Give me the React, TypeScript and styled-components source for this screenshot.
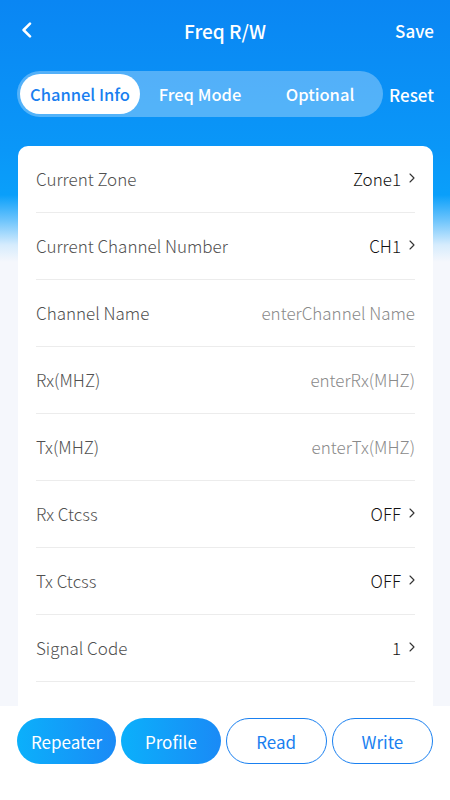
import styled, { createGlobalStyle } from "styled-components";

const GlobalStyle = createGlobalStyle`
  html, body {
    margin: 0;
    padding: 0;
  }
  body {
    font-family: "Noto Sans CJK SC", "Noto Sans", sans-serif;
    -webkit-font-smoothing: antialiased;
  }
  * {
    box-sizing: border-box;
  }
`

type Row = {
  label: string;
  value: string;
  placeholder?: boolean;
  arrow?: boolean;
}

const rows: Row[] = [
  {label: "Current Zone", value: "Zone1", arrow: true},
  {label: "Current Channel Number", value: "CH1", arrow: true},
  {label: "Channel Name", value: "enterChannel Name", placeholder: true},
  {label: "Rx(MHZ)", value: "enterRx(MHZ)", placeholder: true},
  {label: "Tx(MHZ)", value: "enterTx(MHZ)", placeholder: true},
  {label: "Rx Ctcss", value: "OFF", arrow: true},
  {label: "Tx Ctcss", value: "OFF", arrow: true},
  {label: "Signal Code", value: "1", arrow: true},
]

const Chevron = ({size = 10, color = "#333", width = 1.3, left = false}: {size?: number; color?: string; width?: number; left?: boolean}) => (
  <svg width={size * 0.6} height={size} viewBox="0 0 6 10" fill="none">
    <path
      d={left ? "M5 1 L1 5 L5 9" : "M1 1 L5 5 L1 9"}
      stroke={color}
      strokeWidth={width}
      strokeLinecap="round"
      strokeLinejoin="round"
    />
  </svg>
)

export default function App() {
  return (
    <>
      <GlobalStyle/>
      <Page>
        <NavBar>
          <BackButton>
            <Chevron size={16} color="#fff" width={1.6} left/>
          </BackButton>
          <Title>Freq R/W</Title>
          <NavAction>Save</NavAction>
        </NavBar>

        <TabsRow>
          <Tabs>
            <Tab $active>Channel Info</Tab>
            <Tab>Freq Mode</Tab>
            <Tab>Optional</Tab>
          </Tabs>
          <NavAction>Reset</NavAction>
        </TabsRow>

        <Content>
          <Card>
            {rows.map((row) => (
              <ListRow key={row.label}>
                <Label>{row.label}</Label>
                <Value $placeholder={row.placeholder}>
                  {row.value}
                  {row.arrow && <Chevron size={10} color="#333" width={1.1}/>}
                </Value>
              </ListRow>
            ))}
          </Card>
        </Content>

        <Footer>
          <ActionButton $filled>Repeater</ActionButton>
          <ActionButton $filled>Profile</ActionButton>
          <ActionButton>Read</ActionButton>
          <ActionButton>Write</ActionButton>
        </Footer>
      </Page>
    </>
  );
}

const Page = styled.div`
  width: 450px;
  height: 800px;
  display: flex;
  flex-direction: column;
  overflow: hidden;
  background: linear-gradient(180deg,
    #0a86f3 0px,
    #0a97f8 150px,
    #0a9ffa 195px,
    #6cc4fc 220px,
    #d6ecfd 245px,
    #f5f7fc 262px,
    #f5f7fc 100%);
`

const NavBar = styled.header`
  height: 60px;
  display: flex;
  align-items: center;
  justify-content: space-between;
  padding: 0 16px 0 22px;
  position: relative;
  color: #fff;
`

const BackButton = styled.div`
  width: 20px;
  display: flex;
  align-items: center;
`

const Title = styled.h1`
  margin: 0;
  font-size: 19px;
  font-weight: 500;
  color: #fff;
  position: absolute;
  left: 50%;
  transform: translateX(-50%);
`

const NavAction = styled.span`
  font-size: 17px;
  font-weight: 500;
  color: #fff;
`

const TabsRow = styled.div`
  display: flex;
  align-items: center;
  justify-content: space-between;
  padding: 11px 16px 0 17px;
`

const Tabs = styled.div`
  width: 366px;
  flex-shrink: 0;
  height: 46px;
  padding: 3px;
  display: flex;
  border-radius: 23px;
  background: rgba(255, 255, 255, 0.3);
`

const Tab = styled.div<{ $active?: boolean }>`
  flex: 1;
  display: flex;
  align-items: center;
  justify-content: center;
  border-radius: 20px;
  font-size: 16.5px;
  font-weight: 500;
  color: ${p => p.$active ? "#1a7ff0" : "#fff"};
  background: ${p => p.$active ? "#fff" : "transparent"};
`

const Content = styled.main`
  flex: 1;
  overflow: hidden;
  padding: 29px 17px 0 18px;
`

const Card = styled.section`
  background: #fff;
  border-radius: 10px;
  padding: 0 18px 40px;
`

const ListRow = styled.div`
  height: 67px;
  display: flex;
  align-items: center;
  justify-content: space-between;
  border-bottom: 1px solid #ececec;
`

const Label = styled.span`
  font-size: 17px;
  font-weight: 300;
  color: #505050;
  margin-top: -2px;
`

const Value = styled.span<{ $placeholder?: boolean }>`
  display: flex;
  align-items: center;
  gap: 8px;
  margin-top: -2px;
  font-size: 17px;
  font-weight: 300;
  color: ${p => p.$placeholder ? "#8a8a8a" : "#111"};
`

const Footer = styled.footer`
  height: 94px;
  flex-shrink: 0;
  background: #fff;
  display: flex;
  gap: 5px;
  padding: 12px 17px 0;
  align-items: flex-start;
`

const ActionButton = styled.button<{ $filled?: boolean }>`
  flex: 1;
  height: 46px;
  border-radius: 23px;
  font-family: inherit;
  font-size: 17px;
  font-weight: 400;
  cursor: pointer;
  color: ${p => p.$filled ? "#fff" : "#1a7ff0"};
  background: ${p => p.$filled ? "linear-gradient(90deg, #0bb0fb 0%, #1a8af6 100%)" : "#fff"};
  border: ${p => p.$filled ? "none" : "1.5px solid #1a80f0"};
`
